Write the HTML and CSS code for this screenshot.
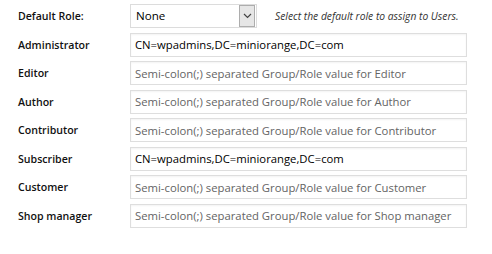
FILE: index.html
```html
<!DOCTYPE html>
<html lang="en">
<head>
<meta charset="utf-8">
<link rel="stylesheet" href="styles.css">
</head>
<body>
<form class="roles">
  <div class="row">
    <label class="label">Default Role:</label>
    <div class="field field-select">
      <div class="select">
        <span class="select-value">None</span>
        <span class="select-btn"><svg width="9" height="6" viewBox="0 0 9 6"><path d="M1 1l3.5 3.5L8 1" fill="none" stroke="#444" stroke-width="1.2"/></svg></span>
      </div>
      <span class="help">Select the default role to assign to Users.</span>
    </div>
  </div>
  <div class="row">
    <label class="label">Administrator</label>
    <input class="input" type="text" value="CN=wpadmins,DC=miniorange,DC=com">
  </div>
  <div class="row">
    <label class="label">Editor</label>
    <input class="input" type="text" placeholder="Semi-colon(;) separated Group/Role value for Editor">
  </div>
  <div class="row">
    <label class="label">Author</label>
    <input class="input" type="text" placeholder="Semi-colon(;) separated Group/Role value for Author">
  </div>
  <div class="row">
    <label class="label">Contributor</label>
    <input class="input" type="text" placeholder="Semi-colon(;) separated Group/Role value for Contributor">
  </div>
  <div class="row">
    <label class="label">Subscriber</label>
    <input class="input" type="text" value="CN=wpadmins,DC=miniorange,DC=com">
  </div>
  <div class="row">
    <label class="label">Customer</label>
    <input class="input" type="text" placeholder="Semi-colon(;) separated Group/Role value for Customer">
  </div>
  <div class="row">
    <label class="label">Shop manager</label>
    <input class="input" type="text" placeholder="Semi-colon(;) separated Group/Role value for Shop manager">
  </div>
</form>
</body>
</html>
```
FILE: styles.css
```css
html, body {
  margin: 0;
  padding: 0;
  background: #fff;
}
body {
  font-family: "Open Sans", "Noto Sans", "DejaVu Sans", sans-serif;
  color: #222;
}
.roles {
  display: flex;
  flex-direction: column;
  gap: 4.5px;
  padding: 4px 0 0 0;
  width: 467px;
}
.row {
  display: grid;
  grid-template-columns: 130px 1fr;
  align-items: center;
  height: 24px;
}
.label {
  padding-left: 18px;
  font-size: 10.6px;
  font-weight: 600;
  color: #111;
}
.field-select {
  display: flex;
  align-items: center;
  gap: 18px;
}
.select {
  box-sizing: border-box;
  width: 127px;
  height: 24px;
  border: 1px solid #dcdcdc;
  display: flex;
  align-items: stretch;
  background: #fff;
}
.select-value {
  flex: 1;
  font-size: 11.6px;
  line-height: 22px;
  padding-left: 5px;
  color: #000;
}
.select-btn {
  width: 14px;
  margin: 0 1px 0 0;
  background: #e6e6e6;
  border: 1px solid #adadad;
  display: flex;
  align-items: center;
  justify-content: center;
}
.help {
  font-size: 10.3px;
  font-style: italic;
  color: #333;
  white-space: nowrap;
}
.input {
  box-sizing: border-box;
  width: 337px;
  height: 24px;
  margin: 0;
  padding: 0 4px;
  border: 1px solid #dedede;
  box-shadow: inset 0 1px 2px rgba(0,0,0,0.05);
  font-family: inherit;
  font-size: 11.3px;
  color: #000;
  background: #fff;
  outline: none;
}
.input::placeholder {
  color: #646464;
  opacity: 1;
}
```
